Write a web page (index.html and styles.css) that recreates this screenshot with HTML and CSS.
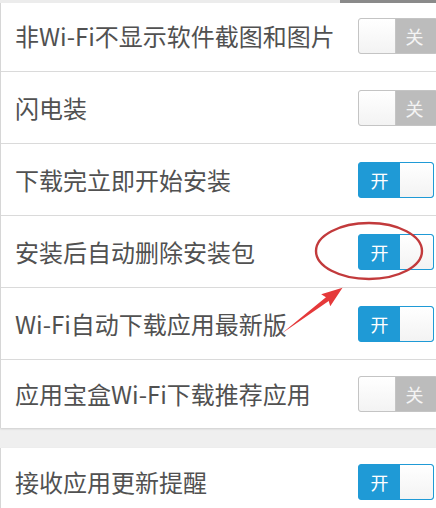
FILE: index.html
```html
<!DOCTYPE html>
<html lang="zh-CN">
<head>
<meta charset="utf-8">
<title>设置</title>
<link rel="stylesheet" href="styles.css">
</head>
<body>
<div class="page">
  <div class="topstrip"><div class="topstrip-fill"></div><div class="topstrip-bar"></div></div>
  <div class="card">
    <div class="row row-first"><span class="label">非Wi-Fi不显示软件截图和图片</span><span class="toggle off"><span class="knob"></span><span class="seg">关</span></span></div>
    <div class="row"><span class="label">闪电装</span><span class="toggle off"><span class="knob"></span><span class="seg">关</span></span></div>
    <div class="row"><span class="label">下载完立即开始安装</span><span class="toggle on"><span class="seg">开</span><span class="knob"></span></span></div>
    <div class="row"><span class="label">安装后自动删除安装包</span><span class="toggle on"><span class="seg">开</span><span class="knob"></span></span></div>
    <div class="row"><span class="label">Wi-Fi自动下载应用最新版</span><span class="toggle on"><span class="seg">开</span><span class="knob"></span></span></div>
    <div class="row row-last"><span class="label">应用宝盒Wi-Fi下载推荐应用</span><span class="toggle off"><span class="knob"></span><span class="seg">关</span></span></div>
  </div>
  <div class="card card-second">
    <div class="row row-last"><span class="label">接收应用更新提醒</span><span class="toggle on"><span class="seg">开</span><span class="knob"></span></span></div>
  </div>
  <svg class="annot" width="436" height="508" viewBox="0 0 436 508" xmlns="http://www.w3.org/2000/svg">
    <ellipse cx="369" cy="251" rx="53" ry="28" fill="none" stroke="#c23a3c" stroke-width="2.4"/>
    <g transform="translate(281 334) rotate(-37)">
      <polygon points="0,0 58,-2.3 56,-7.5 77,0 56,7.5 58,2.3" fill="#e5393a"/>
    </g>
  </svg>
</div>
</body>
</html>
```
FILE: styles.css
```css
html, body {
  margin: 0;
  padding: 0;
}
body {
  background: #efefef;
  font-family: "Noto Sans CJK SC", "Noto Sans", sans-serif;
  width: 436px;
  height: 508px;
  overflow: hidden;
}
.page {
  position: relative;
  width: 436px;
  height: 508px;
}
.topstrip {
  display: flex;
  height: 3px;
}
.topstrip-fill {
  flex: 1;
  background: #ececec;
}
.topstrip-bar {
  width: 96px;
  background: #8a8a8a;
}
.card {
  background: #ffffff;
  border-left: 1px solid #d6d6d6;
  box-shadow: 0 1px 2px rgba(0, 0, 0, 0.14);
  overflow: hidden;
}
.card-second {
  margin-top: 20px;
}
.row {
  display: flex;
  align-items: center;
  justify-content: space-between;
  box-sizing: border-box;
  height: 72px;
  padding-left: 14px;
  border-bottom: 1px solid #dadada;
}
.row-first {
  height: 69px;
  padding-bottom: 2px;
}
.row-last {
  height: 68px;
  border-bottom: none;
}
.label {
  font-size: 24px;
  color: #515151;
  line-height: 1;
  letter-spacing: 0;
  white-space: nowrap;
}
.toggle {
  display: flex;
  width: 76px;
  height: 36px;
  box-sizing: border-box;
  border-radius: 3px;
  overflow: hidden;
  margin-right: 2px;
  flex-shrink: 0;
}
.toggle .seg {
  flex: 1;
  display: flex;
  align-items: center;
  justify-content: center;
  font-size: 18px;
  line-height: 1;
  color: #f4f4f4;
}
.toggle .knob {
  width: 37px;
  box-sizing: border-box;
  background: linear-gradient(#ffffff, #f3f3f3);
}
.toggle.off {
  width: 80px;
  margin-right: -2px;
  border: 1px solid #c4c4c4;
  background: #bcbcbc;
}
.toggle.off .seg {
  padding-right: 4px;
}
.toggle.off .knob {
  border-right: 1px solid #c4c4c4;
}
.toggle.on {
  border: 1px solid #1f9ad6;
  background: #1f9ad6;
}
.toggle.on .seg {
  color: #ffffff;
}
.toggle.on .knob {
  width: 33px;
  border-radius: 0 2px 2px 0;
}
.annot {
  position: absolute;
  left: 0;
  top: 0;
  pointer-events: none;
}
```
